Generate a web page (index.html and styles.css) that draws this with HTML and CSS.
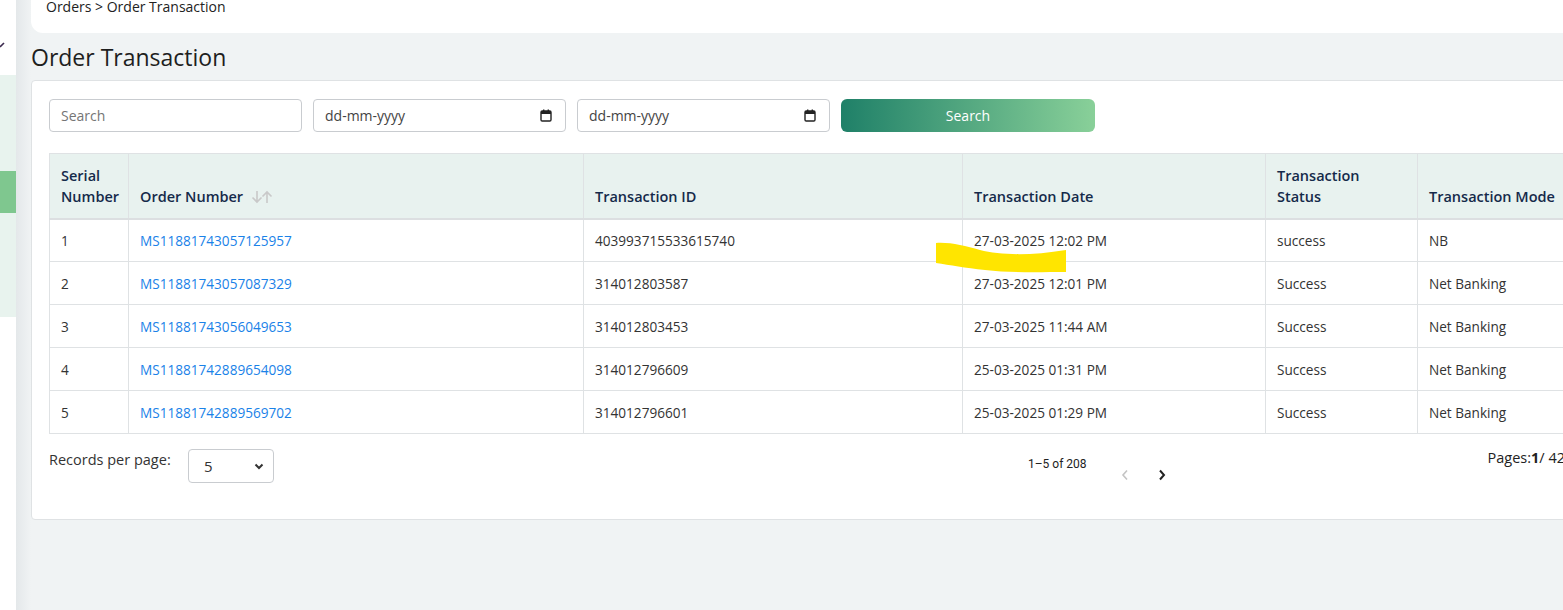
FILE: index.html
```html
<!DOCTYPE html>
<html lang="en">
  <head>
    <meta charset="UTF-8" />
    <meta name="viewport" content="width=device-width, initial-scale=1.0" />
    <title>Order Transaction</title>
    <link rel="stylesheet" href="styles.css">
  </head>
  <body>
    <aside class="sidebar">
      <div class="side-top">
        <svg class="side-caret" width="6" height="6" viewBox="0 0 6 6"><path d="M0 5 L4 1" stroke="#3b2a4f" stroke-width="1.6" fill="none"/></svg>
      </div>
      <div class="side-menu">
        <div class="side-item"></div>
        <div class="side-item active"></div>
      </div>
    </aside>

    <main class="main">
      <div class="breadcrumb">
        <span>Orders &gt; Order Transaction</span>
      </div>

      <h1 class="page-title">Order Transaction</h1>

      <section class="card">
        <div class="filters">
          <input class="field" type="text" placeholder="Search" />
          <div class="field date-field">
            <span>dd-mm-yyyy</span>
            <svg width="12" height="13" viewBox="0 0 12 13"><rect x="1" y="2" width="10" height="10" rx="1.2" fill="none" stroke="#222" stroke-width="1.4"/><rect x="1" y="2" width="10" height="3" fill="#222"/><rect x="3" y="0.5" width="1.4" height="2.5" fill="#222"/><rect x="7.6" y="0.5" width="1.4" height="2.5" fill="#222"/></svg>
          </div>
          <div class="field date-field">
            <span>dd-mm-yyyy</span>
            <svg width="12" height="13" viewBox="0 0 12 13"><rect x="1" y="2" width="10" height="10" rx="1.2" fill="none" stroke="#222" stroke-width="1.4"/><rect x="1" y="2" width="10" height="3" fill="#222"/><rect x="3" y="0.5" width="1.4" height="2.5" fill="#222"/><rect x="7.6" y="0.5" width="1.4" height="2.5" fill="#222"/></svg>
          </div>
          <button class="search-btn">Search</button>
        </div>

        <table class="orders">
          <colgroup>
            <col style="width: 79px" />
            <col style="width: 455px" />
            <col style="width: 379px" />
            <col style="width: 303px" />
            <col style="width: 152px" />
            <col style="width: 148px" />
          </colgroup>
          <thead>
            <tr>
              <th>Serial Number</th>
              <th>
                Order Number
                <svg class="sort-icon" width="22" height="14" viewBox="0 0 22 14"><path d="M6 1 V12 M1.5 7.5 L6 12 L10.5 7.5" stroke="#c9c9c9" stroke-width="1.6" fill="none"/><path d="M16 13 V2 M11.5 6.5 L16 2 L20.5 6.5" stroke="#c9c9c9" stroke-width="1.6" fill="none"/></svg>
              </th>
              <th>Transaction ID</th>
              <th>Transaction Date</th>
              <th>Transaction<br />Status</th>
              <th class="nowrap">Transaction Mode</th>
            </tr>
          </thead>
          <tbody>
            <tr>
              <td>1</td>
              <td><a href="#">MS11881743057125957</a></td>
              <td>403993715533615740</td>
              <td>27-03-2025 12:02 PM</td>
              <td>success</td>
              <td>NB</td>
            </tr>
            <tr>
              <td>2</td>
              <td><a href="#">MS11881743057087329</a></td>
              <td>314012803587</td>
              <td>27-03-2025 12:01 PM</td>
              <td>Success</td>
              <td>Net Banking</td>
            </tr>
            <tr>
              <td>3</td>
              <td><a href="#">MS11881743056049653</a></td>
              <td>314012803453</td>
              <td>27-03-2025 11:44 AM</td>
              <td>Success</td>
              <td>Net Banking</td>
            </tr>
            <tr>
              <td>4</td>
              <td><a href="#">MS11881742889654098</a></td>
              <td>314012796609</td>
              <td>25-03-2025 01:31 PM</td>
              <td>Success</td>
              <td>Net Banking</td>
            </tr>
            <tr>
              <td>5</td>
              <td><a href="#">MS11881742889569702</a></td>
              <td>314012796601</td>
              <td>25-03-2025 01:29 PM</td>
              <td>Success</td>
              <td>Net Banking</td>
            </tr>
          </tbody>
        </table>

        <div class="pager">
          <div class="per-page">
            <span>Records per page:</span>
            <div class="select">
              <span>5</span>
              <svg width="10" height="7" viewBox="0 0 10 7"><path d="M1.5 1.5 L5 5 L8.5 1.5" stroke="#333" stroke-width="2" fill="none"/></svg>
            </div>
          </div>
          <div class="pager-info">
            <span class="range">1–5 of 208</span>
            <div class="arrows">
              <svg width="8" height="12" viewBox="0 0 8 12"><path d="M6 1.5 L2 6 L6 10.5" stroke="#c4c4c4" stroke-width="1.6" fill="none"/></svg>
              <svg width="8" height="12" viewBox="0 0 8 12"><path d="M2 1.5 L6 6 L2 10.5" stroke="#222" stroke-width="2" fill="none"/></svg>
            </div>
          </div>
          <div class="pages">Pages:<b>1</b>/ 42</div>
        </div>
      </section>
    </main>

    <!-- highlighter mark drawn over the first row -->
    <svg class="marker" width="140" height="34" viewBox="930 240 140 34">
      <path d="M936 243 C950 242 965 246 980 250 C1000 255 1030 256 1066 250 L1066 272 C1040 272 1010 273 985 270 C965 268 950 265 936 263 Z" fill="#ffe500"/>
    </svg>
  </body>
</html>
```

FILE: styles.css
```css
* {
  margin: 0;
  padding: 0;
  box-sizing: border-box;
}

:root {
  --bg: #f0f3f4;
  --border: #dfe2e4;
  --head-bg: #e8f2ef;
  --head-text: #152a4a;
  --text: #333333;
  --link: #1a82e8;
}

body {
  font-family: "Open Sans", "Liberation Sans", sans-serif;
  font-size: 14px;
  color: var(--text);
  background: var(--bg);
  display: flex;
  height: 610px;
  overflow: hidden;
}

.sidebar {
  flex: 0 0 16px;
  background: #ffffff;
  display: flex;
  flex-direction: column;
}

.side-top {
  height: 75px;
  padding-top: 42px;
}

.side-caret {
  display: block;
}

.side-menu {
  height: 242px;
  background: #e8f3ee;
  padding-top: 96px;
}

.side-item.active {
  height: 42px;
  background: #7fc78f;
}

.main {
  flex: 0 0 1600px;
  padding-left: 15px;
  background: linear-gradient(to right, #e4e8ea, var(--bg) 15px);
}

.breadcrumb {
  display: flow-root;
  height: 33px;
  background: #ffffff;
  border-bottom-left-radius: 12px;
  padding-left: 15px;
  width: 1532px;
}

.breadcrumb span {
  display: block;
  margin-top: -3px;
  line-height: 20px;
  color: #222222;
}

.page-title {
  font-size: 23px;
  font-weight: 500;
  color: #1e1e1e;
  line-height: 30px;
  margin-top: 9px;
}

.card {
  margin-top: 8px;
  width: 1552px;
  background: #ffffff;
  border: 1px solid var(--border);
  border-radius: 4px;
  padding: 18px 17px 36px;
}

.filters {
  display: flex;
  gap: 11px;
  align-items: center;
}

.field {
  width: 253px;
  height: 33px;
  border: 1px solid #c9ccd0;
  border-radius: 4px;
  padding: 0 11px;
  font-family: inherit;
  font-size: 14px;
  color: #333;
  outline: none;
}

.field::placeholder {
  color: #757575;
}

.date-field {
  display: flex;
  align-items: center;
  justify-content: space-between;
  color: #444;
  padding-right: 13px;
}

.search-btn {
  width: 254px;
  height: 33px;
  border: none;
  border-radius: 6px;
  background: linear-gradient(to right, #1f8068, #89d099);
  color: #ffffff;
  font-family: inherit;
  font-size: 14px;
  font-weight: 500;
}

.orders {
  margin-top: 21px;
  width: 1516px;
  table-layout: fixed;
  border-collapse: collapse;
}

.orders th,
.orders td {
  border: 1px solid var(--border);
  padding: 0 11px;
  text-align: left;
  vertical-align: middle;
}

.orders th {
  background: var(--head-bg);
  color: var(--head-text);
  font-weight: 600;
  font-size: 14.5px;
  height: 65px;
  line-height: 21px;
  vertical-align: bottom;
  padding-bottom: 11px;
  border-bottom: 2px solid #dcdfe1;
}

.orders th.nowrap {
  white-space: nowrap;
}

.sort-icon {
  vertical-align: -2px;
  margin-left: 4px;
}

.orders td {
  height: 43px;
  font-size: 13.6px;
  color: var(--text);
}

.orders a {
  color: var(--link);
  text-decoration: none;
}

.pager {
  display: flex;
  align-items: flex-start;
  margin-top: 14px;
}

.per-page {
  display: flex;
  gap: 11px;
  align-items: flex-start;
  padding-top: 1px;
}

.per-page > span {
  width: 128px;
  font-size: 14.5px;
  line-height: 20px;
  margin-top: 1px;
}

.select {
  width: 86px;
  height: 34px;
  border: 1px solid #c9ccd0;
  border-radius: 4px;
  display: flex;
  align-items: center;
  justify-content: space-between;
  padding: 0 9px 0 15px;
  font-size: 15px;
}

.pager-info {
  margin-left: 754px;
  display: flex;
  gap: 34px;
  padding-top: 9px;
}

.range {
  font-family: Roboto, "Liberation Sans", sans-serif;
  font-size: 12px;
  color: #222;
}

.arrows {
  display: flex;
  gap: 29px;
  padding-top: 12px;
}

.arrows svg {
  display: block;
}

.pages {
  margin-left: auto;
  font-size: 14.5px;
  line-height: 20px;
  color: #222;
}

.pages b {
  font-weight: 700;
}

.marker {
  position: absolute;
  left: 930px;
  top: 240px;
}
```
